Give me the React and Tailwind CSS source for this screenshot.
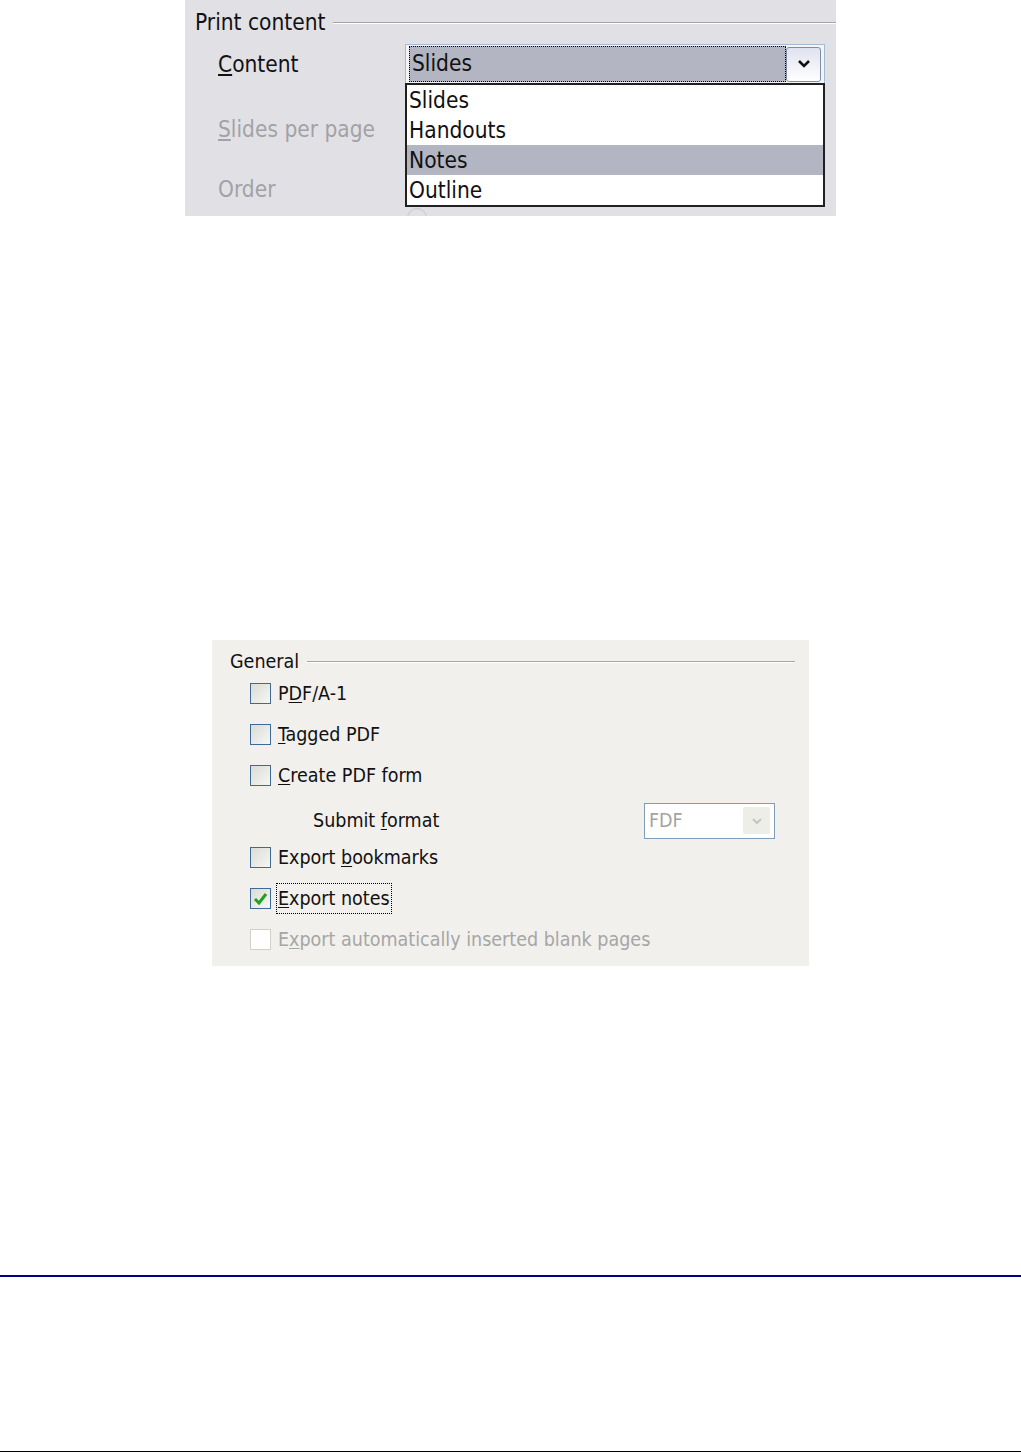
import React from "react";

const font = { fontFamily: "'DejaVu Sans Condensed', 'DejaVu Sans', sans-serif" };

function U({ children }) {
  return <span className="underline underline-offset-2">{children}</span>;
}

function Legend({ label }) {
  return (
    <div className="flex items-center">
      <span>{label}</span>
      <div className="ml-2 flex-1 flex flex-col">
        <div className="h-px bg-[#a5a5a8]" />
        <div className="h-px bg-white" />
      </div>
    </div>
  );
}

function Check({ checked, disabled }) {
  return (
    <div
      className={
        "w-[21px] h-[21px] border flex items-center justify-center " +
        (disabled
          ? "border-[#d3d1c6] bg-white"
          : "border-[#3d6a98] bg-gradient-to-br from-[#dcdcd6] to-[#f6f6f3]")
      }
    >
      {checked && (
        <svg width="15" height="14" viewBox="0 0 15 14">
          <path d="M2 7 L6 11 L13 2" fill="none" stroke="#21a121" strokeWidth="3" />
        </svg>
      )}
    </div>
  );
}

function CheckRow({ children, checked, disabled, focus }) {
  return (
    <div className="h-[41px] flex items-center pl-[38px]">
      <Check checked={checked} disabled={disabled} />
      <span
        className={
          "ml-[5px] px-px " +
          (disabled ? "text-[#a6a6a6] " : "text-[#111] ") +
          (focus ? "border border-dotted border-black" : "border border-transparent")
        }
      >
        {children}
      </span>
    </div>
  );
}

export default function App() {
  return (
    <div className="bg-white w-[1021px] h-[1453px] relative" style={font}>
      {/* Print content panel */}
      <div className="ml-[185px] w-[651px] h-[216px] bg-[#e1e1e5] relative overflow-hidden text-[22.5px] text-[#111]">
        <div className="pt-[6px] pl-[10px]">
          <Legend label="Print content" />
        </div>
        <div className="grid grid-cols-[187px_420px] pl-[33px] mt-[4px]">
          <div className="h-[41px] flex items-center pt-[2px]">
            <span>
              <U>C</U>ontent
            </span>
          </div>
          <div className="h-[41px] border border-[#a3bbd3] bg-[#f4f4f6] flex items-center px-[3px]">
            <div className="flex-1 h-[36px] bg-[#b3b5c2] border border-dotted border-black flex items-center pl-[2px]">
              Slides
            </div>
            <div className="w-[35px] h-[35px] rounded-[3px] border border-[#7d8ea8] bg-gradient-to-b from-[#dfe3f0] to-white flex items-center justify-center">
              <svg width="14" height="10" viewBox="0 0 14 10">
                <path d="M2 2 L7 7 L12 2" fill="none" stroke="#111" strokeWidth="2.6" />
              </svg>
            </div>
          </div>
          <div className="h-[90px] flex items-center text-[#a2a2a6]">
            <span>
              <U>S</U>lides per page
            </span>
          </div>
          <div />
          <div className="h-[30px] flex items-center text-[#a2a2a6]">Order</div>
          <div />
        </div>
        <div className="absolute left-[222px] top-[208px] w-[20px] h-[20px] rounded-full border border-[#c8c8cc]" />

        {/* open list */}
        <div className="absolute left-[220px] top-[83px] w-[420px] h-[124px] bg-white border-2 border-[#202020]">
          <div className="h-[30px] flex items-center pl-[2px] pt-[2px]">Slides</div>
          <div className="h-[30px] flex items-center pl-[2px] pt-[2px]">Handouts</div>
          <div className="h-[30px] flex items-center pl-[2px] pt-[2px] bg-[#b3b5c2]">Notes</div>
          <div className="h-[30px] flex items-center pl-[2px] pt-[2px]">Outline</div>
        </div>
      </div>

      {/* General panel */}
      <div className="mt-[424px] ml-[212px] w-[597px] h-[326px] bg-[#f1f0ec] text-[19.5px] text-[#111] pt-[7px]">
        <div className="pl-[18px] pr-[14px]">
          <Legend label="General" />
        </div>
        <div className="-mt-[3px]">
          <CheckRow>
            P<U>D</U>F/A-1
          </CheckRow>
          <CheckRow>
            <U>T</U>agged PDF
          </CheckRow>
          <CheckRow>
            <U>C</U>reate PDF form
          </CheckRow>
          <div className="h-[41px] flex items-center pl-[101px] pt-[8px]">
            <span className="w-[331px]">
              Submit <U>f</U>ormat
            </span>
            <div className="w-[131px] h-[36px] border border-[#7f9db9] bg-white flex items-center pl-[4px] pr-[4px]">
              <span className="flex-1 text-[#a3a3a3]">FDF</span>
              <div className="w-[27px] h-[27px] bg-[#eeeee8] rounded-[2px] flex items-center justify-center">
                <svg width="12" height="8" viewBox="0 0 12 8">
                  <path d="M2 2 L6 6 L10 2" fill="none" stroke="#c4c4c0" strokeWidth="2" />
                </svg>
              </div>
            </div>
          </div>
          <CheckRow>
            Export <U>b</U>ookmarks
          </CheckRow>
          <CheckRow checked focus>
            <U>E</U>xport notes
          </CheckRow>
          <CheckRow disabled>
            E<U>x</U>port automatically inserted blank pages
          </CheckRow>
        </div>
      </div>

      <div className="mt-[309px] h-[2px] bg-[#000080]" />
      <div className="mt-[174px] h-px bg-black" />
    </div>
  );
}
